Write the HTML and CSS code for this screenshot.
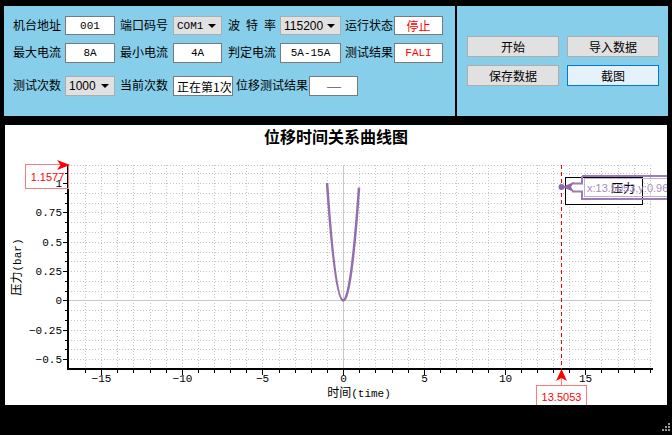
FILE: index.html
```html
<!DOCTYPE html>
<html>
<head>
<meta charset="utf-8">
<link rel="stylesheet" href="styles.css">
</head>
<body>
<div class="screen">
  <div class="top">
    <div class="form">
      <div class="row r1">
        <span class="lbl">机台地址</span><span class="field w50 mono">001</span>
        <span class="lbl">端口码号</span><span class="combo w49"><span class="mono">COM1</span><i class="arrow"></i></span>
        <span class="lbl just">波 特 率</span><span class="combo w61"><span class="sans">115200</span><i class="arrow"></i></span>
        <span class="lbl">运行状态</span><span class="field w49 red">停止</span>
      </div>
      <div class="row r2">
        <span class="lbl">最大电流</span><span class="field w50 mono">8A</span>
        <span class="lbl">最小电流</span><span class="field w49 mono">4A</span>
        <span class="lbl">判定电流</span><span class="field w61 mono">5A-15A</span>
        <span class="lbl">测试结果</span><span class="field w49 mono red">FALI</span>
      </div>
      <div class="row r3">
        <span class="lbl">测试次数</span><span class="combo w50"><span class="sans">1000</span><i class="arrow"></i></span>
        <span class="lbl">当前次数</span><span class="field w60 left">正在第1次</span>
        <span class="lbl">位移测试结果</span><span class="field w49 dash">——</span>
      </div>
    </div>
    <div class="actions">
      <button class="btn">开始</button>
      <button class="btn">导入数据</button>
      <button class="btn">保存数据</button>
      <button class="btn focus">截图</button>
    </div>
  </div>
  <div class="chart">
    <svg class="plot" width="662" height="280" viewBox="5 125 662 280">
      <text class="title" x="336" y="143" text-anchor="middle">位移时间关系曲线图</text>
      <path class="grid" d="M68 359.5H652M68 349.5H652M68 340.5H652M68 330.5H652M68 320.5H652M68 310.5H652M68 291.5H652M68 281.5H652M68 271.5H652M68 261.5H652M68 252.5H652M68 242.5H652M68 232.5H652M68 222.5H652M68 212.5H652M68 203.5H652M68 193.5H652M68 183.5H652M68 173.5H652M68 165.5H652
      M85.5 165V369M101.5 165V369M117.5 165V369M133.5 165V369M150.5 165V369M166.5 165V369M182.5 165V369M198.5 165V369M214.5 165V369M230.5 165V369M246.5 165V369M262.5 165V369M279.5 165V369M295.5 165V369M311.5 165V369M327.5 165V369M359.5 165V369M375.5 165V369M392.5 165V369M408.5 165V369M424.5 165V369M440.5 165V369M456.5 165V369M472.5 165V369M488.5 165V369M505.5 165V369M521.5 165V369M537.5 165V369M553.5 165V369M569.5 165V369M585.5 165V369M601.5 165V369M618.5 165V369M634.5 165V369M650.5 165V369"/>
      <path class="zero" d="M68 300.5H652M343.5 165V369"/>
      <path class="axis" d="M68 164V370M67 369H653"/>
      <path class="ticks" d="M63 183.5H68M63 212.5H68M63 242.5H68M63 271.5H68M63 300.5H68M63 330.5H68M63 359.5H68
      M65 349.5H68M65 340.5H68M65 320.5H68M65 310.5H68M65 291.5H68M65 281.5H68M65 261.5H68M65 252.5H68M65 232.5H68M65 222.5H68M65 203.5H68M65 193.5H68M65 173.5H68
      M101.5 369V375M182.5 369V375M262.5 369V375M343.5 369V375M424.5 369V375M505.5 369V375M585.5 369V375
      M85.5 369V373M117.5 369V373M133.5 369V373M150.5 369V373M166.5 369V373M198.5 369V373M214.5 369V373M230.5 369V373M246.5 369V373M279.5 369V373M295.5 369V373M311.5 369V373M327.5 369V373M359.5 369V373M375.5 369V373M392.5 369V373M408.5 369V373M440.5 369V373M456.5 369V373M472.5 369V373M488.5 369V373M521.5 369V373M537.5 369V373M553.5 369V373M569.5 369V373M601.5 369V373M618.5 369V373M634.5 369V373M650.5 369V373"/>

      <rect class="mark-box" x="25.5" y="164.5" width="43" height="24"/>
      <text class="mark-text" x="47.5" y="181" text-anchor="middle">1.1577</text>
      <polygon class="mark-arrow" points="70,165 57,160 60.5,165 57,170"/>

      <g class="ylabels" text-anchor="end">
        <text x="62" y="187">1</text>
        <text x="62" y="216">0.75</text>
        <text x="62" y="246">0.5</text>
        <text x="62" y="275">0.25</text>
        <text x="62" y="304">0</text>
        <text x="62" y="334">−0.25</text>
        <text x="62" y="363">−0.5</text>
      </g>
      <g class="xlabels" text-anchor="middle">
        <text x="101.5" y="382">−15</text>
        <text x="182.5" y="382">−10</text>
        <text x="262.5" y="382">−5</text>
        <text x="343.5" y="382">0</text>
        <text x="424.5" y="382">5</text>
        <text x="505.5" y="382">10</text>
        <text x="585.5" y="382">15</text>
      </g>
      <text class="axis-title" x="359" y="397" text-anchor="middle">时间<tspan class="ascii">(time)</tspan></text>
      <text class="axis-title" transform="translate(21,267) rotate(-90)" text-anchor="middle">压力<tspan class="ascii">(bar)</tspan></text>

      <path class="curve" d="M327.06 183 Q343.04 415.65 359.02 187.65"/>

      <line class="cursor" x1="561.5" y1="165" x2="561.5" y2="369"/>
      <line class="mark-line" x1="561.5" y1="378" x2="561.5" y2="385.5"/>
      <polygon class="mark-arrow" points="561.5,369 567,381 561.5,378 556,381"/>
      <rect class="mark-box" x="536.5" y="385.5" width="50" height="26"/>
      <text class="mark-text" x="561.5" y="401" text-anchor="middle">13.5053</text>

      <rect class="legend" x="565.5" y="177.5" width="77" height="27"/>
      <text class="legend-text" x="611" y="193">压力</text>

      <path class="tip-outer" d="M582 176H700V199H582V191.5H572M582 176V183.5H572"/>
      <rect class="tip-inner" x="584.5" y="178.5" width="120" height="18"/>
      <polygon class="tip-arrow" points="562,187 574,182 571,187 574,192"/>
      <circle class="tip-dot" cx="561.5" cy="187" r="3"/>
      <text class="tip-text" x="587" y="192">x:13.5053,y:0.96</text>
    </svg>
  </div>
  <svg class="grip" width="10" height="10" viewBox="0 0 10 10">
    <rect x="7" y="0" width="2" height="2"/>
    <rect x="4" y="3" width="2" height="2"/>
    <rect x="7" y="3" width="2" height="2"/>
    <rect x="1" y="6" width="2" height="2"/>
    <rect x="4" y="6" width="2" height="2"/>
    <rect x="7" y="6" width="2" height="2"/>
  </svg>
</div>
</body>
</html>
```
FILE: styles.css
```css
html, body {
  margin: 0;
  padding: 0;
  background: #000;
}
body {
  width: 672px;
  height: 435px;
  overflow: hidden;
  font-family: "Noto Sans CJK SC", sans-serif;
  font-size: 12px;
  color: #000;
}
.screen {
  position: relative;
  width: 672px;
  height: 435px;
}
.top {
  display: flex;
  padding: 6px 0 0 4px;
  height: 110px;
}
.form {
  width: 451px;
  height: 110px;
  background: #87ceeb;
  box-sizing: border-box;
  padding: 10px 0 0 9px;
}
.actions {
  width: 211px;
  height: 110px;
  margin-left: 2px;
  background: #87ceeb;
  box-sizing: border-box;
  padding: 30px 0 0 10px;
  display: grid;
  grid-template-columns: 92px 92px;
  grid-auto-rows: 21px;
  column-gap: 8px;
  row-gap: 8px;
  align-content: start;
}
.row {
  display: grid;
  align-items: center;
}
.r1, .r2 {
  grid-template-columns: 52px 55px 53px 55px 52px 65px 49px 49px;
}
.r1 { height: 19px; }
.r2 { height: 20px; margin-top: 8px; }
.r3 {
  height: 20px;
  margin-top: 13px;
  grid-template-columns: 52px 55px 53px 63px 73px 49px;
}
.lbl {
  white-space: nowrap;
  line-height: 16px;
  margin-top: -2px;
}
.just {
  width: 48px;
  text-align: justify;
  text-align-last: justify;
}
.field, .combo {
  box-sizing: border-box;
  height: 100%;
  display: flex;
  align-items: center;
  overflow: hidden;
  white-space: nowrap;
}
.field {
  justify-content: center;
  background: #fff;
  border: 1px solid #7a7a7a;
}
.combo {
  justify-content: space-between;
  background: #e1e1e1;
  border: 1px solid #adadad;
  padding: 0 5px 0 3px;
}
.arrow {
  width: 0;
  height: 0;
  border-left: 4px solid transparent;
  border-right: 4px solid transparent;
  border-top: 4px solid #000;
}
.w49 { width: 49px; }
.w50 { width: 50px; }
.w60 { width: 60px; }
.w61 { width: 61px; }
.mono {
  font-family: "Liberation Mono", monospace;
  font-size: 11px;
}
.sans {
  font-family: "Liberation Sans", sans-serif;
  font-size: 12px;
}
.red { color: #ff0000; }
.left {
  justify-content: flex-start;
  padding-left: 3px;
  font-size: 12px;
}
.dash {
  font-size: 9px;
  letter-spacing: -1px;
}
.btn {
  box-sizing: border-box;
  margin: 0;
  padding: 0;
  height: 21px;
  border: 1px solid #adadad;
  background: #e1e1e1;
  font-family: "Noto Sans CJK SC", sans-serif;
  font-size: 12px;
  color: #000;
}
.btn.focus {
  border-color: #0078d7;
  background: #e5f1fb;
}
.chart {
  margin: 9px 0 0 5px;
  width: 662px;
  height: 280px;
  background: #fff;
  overflow: hidden;
}
.plot {
  display: block;
  overflow: hidden;
}
.title {
  font-family: "Noto Sans CJK SC", sans-serif;
  font-size: 16px;
  font-weight: bold;
  fill: #000;
}
.grid {
  fill: none;
  stroke: #c4c4c4;
  stroke-width: 1;
  stroke-dasharray: 1 2;
}
.zero {
  fill: none;
  stroke: #c8c8c8;
  stroke-width: 1;
}
.axis {
  fill: none;
  stroke: #000;
  stroke-width: 2;
}
.ticks {
  fill: none;
  stroke: #000;
  stroke-width: 1;
}
.ylabels text, .xlabels text {
  font-family: "Liberation Mono", monospace;
  font-size: 11px;
  fill: #000;
}
.axis-title {
  font-family: "Noto Sans CJK SC", sans-serif;
  font-size: 12px;
  fill: #000;
}
.ascii {
  font-family: "Liberation Mono", monospace;
  font-size: 11px;
}
.curve {
  fill: none;
  stroke: #9370ab;
  stroke-width: 2.5;
}
.cursor {
  stroke: #ff0000;
  stroke-width: 1;
  stroke-dasharray: 4 3;
}
.mark-line {
  stroke: #ff8080;
  stroke-width: 1;
}
.mark-arrow {
  fill: #ff0000;
}
.mark-box {
  fill: none;
  stroke: #ff7b7b;
  stroke-width: 1;
}
.mark-text {
  font-family: "Liberation Sans", sans-serif;
  font-size: 11px;
  fill: #ff0000;
}
.legend {
  fill: #fff;
  stroke: #000;
  stroke-width: 1;
}
.legend-text {
  font-family: "Noto Sans CJK SC", sans-serif;
  font-size: 12px;
  fill: #000;
}
.tip-outer {
  fill: none;
  stroke: #9b7db6;
  stroke-width: 2;
}
.tip-inner {
  fill: none;
  stroke: #c2add3;
  stroke-width: 1;
}
.tip-arrow, .tip-dot {
  fill: #8e68a8;
}
.tip-text {
  font-family: "Liberation Sans", sans-serif;
  font-size: 11px;
  fill: #a88cc0;
}
.grip {
  position: absolute;
  left: 661px;
  top: 423px;
  fill: #9a9a9a;
}
```
